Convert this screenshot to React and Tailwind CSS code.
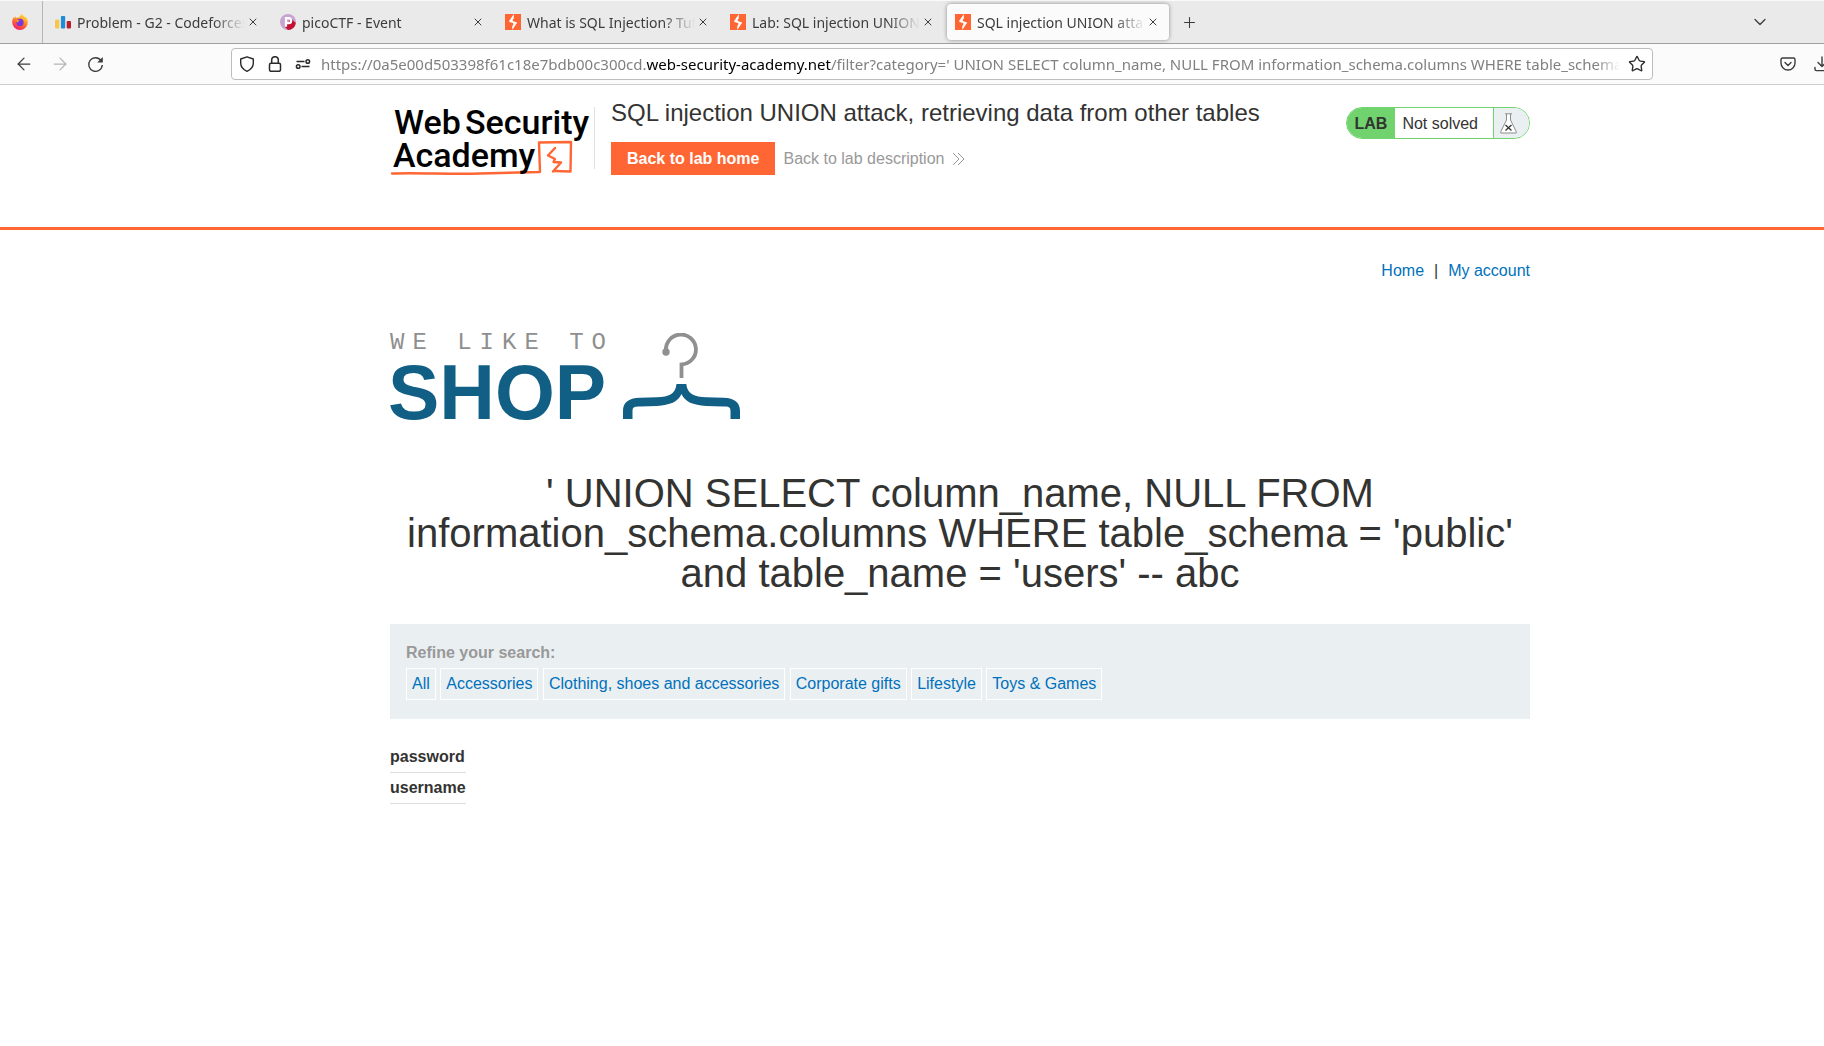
import { ArrowLeft, ArrowRight, X, Plus, ChevronDown, Star } from "lucide-react";

const FirefoxIcon = () => (
  <svg width="16" height="16" viewBox="0 0 16 16" aria-hidden="true">
    <defs>
      <linearGradient id="ff" x1="0.8" y1="0" x2="0.3" y2="1">
        <stop offset="0" stopColor="#fff04a" />
        <stop offset="0.45" stopColor="#ff8a1f" />
        <stop offset="1" stopColor="#f5156c" />
      </linearGradient>
    </defs>
    <path d="M10.5 0c.3 1.600 1.500 2.300 2.300 3.300.3-.1.500-.500.500-.900 1.500 1.400 2.500 3.500 2.500 5.700A7.800 7.800 0 0 1 8 16 7.800 7.800 0 0 1 .2 8.300c0-2 .6-3.800 1.800-5.200l.5 1.400 1.300-2.200.5 1.700c1-.4 2-.5 3-.3C7.600 1.800 9 .7 10.500 0z" fill="url(#ff)" />
    <circle cx="8" cy="8.400" r="3.600" fill="#7a35dd" />
    <path d="M4 6.500c1.500-.9 3-.6 4 .6-1.200 0-1.700.5-1.900 1.300-.8.200-1.600-.4-2.100-1.900z" fill="#ff9a1f" />
  </svg>
);

const CodeforcesIcon = () => (
  <svg width="16" height="16" viewBox="0 0 16 16" aria-hidden="true">
    <rect x="0" y="5.500" width="4.300" height="9" rx="1" fill="#f8c64d" />
    <rect x="5.900" y="2" width="4.300" height="12.500" rx="1" fill="#1f8dd6" />
    <rect x="11.700" y="7" width="4.300" height="7.500" rx="1" fill="#b9202c" />
  </svg>
);

const PicoIcon = () => (
  <svg width="16" height="16" viewBox="0 0 16 16" aria-hidden="true">
    <circle cx="8" cy="8" r="8" fill="#c8a4d3" />
    <path d="M11 4.500l4.800 4.500A8 8 0 0 1 8 16l-3-3z" fill="#c4112f" />
    <path d="M6 12.800V4.200h2.700a2.400 2.400 0 0 1 0 4.900H6" fill="none" stroke="#fff" strokeWidth="2.200" />
  </svg>
);

const BurpIcon = () => (
  <svg width="16" height="16" viewBox="0 0 16 16" aria-hidden="true">
    <rect width="16" height="16" fill="#ff6633" />
    <path d="M8.800 0L4 7.300l3.800 1.200V5.600L8.800 4.500zM7.300 16l4.700-7.300L8.300 7.500v3.200L7.300 12z" fill="#fff" />
    <path d="M4.500 7.200l7 1.800" stroke="#fff" strokeWidth="1.500" />
  </svg>
);

const tabs = [
  { title: "Problem - G2 - Codeforces", icon: CodeforcesIcon },
  { title: "picoCTF - Event", icon: PicoIcon },
  { title: "What is SQL Injection? Tutorial", icon: BurpIcon },
  { title: "Lab: SQL injection UNION attack", icon: BurpIcon },
  { title: "SQL injection UNION attack, retrieving", icon: BurpIcon, active: true },
];

const categories = ["All", "Accessories", "Clothing, shoes and accessories", "Corporate gifts", "Lifestyle", "Toys & Games"];

function Tab({ title, icon: Icon, active }) {
  return (
    <div className={`flex h-9 w-[222px] shrink-0 items-center rounded px-2 ${active ? "bg-[#fbfbfb] shadow-[0_0_4px_rgba(0,0,0,0.4)]" : ""}`}>
      <button className="flex min-w-0 flex-1 items-center gap-[6px] text-left">
        <span className="shrink-0"><Icon /></span>
        <span className="min-w-0 flex-1 overflow-hidden pt-px whitespace-nowrap [mask-image:linear-gradient(to_left,transparent,black_32px)]">{title}</span>
      </button>
      <button aria-label={`Close ${title}`} className="flex w-4 shrink-0 items-center justify-center pr-px">
        <X size={12} strokeWidth={2} className="shrink-0" />
      </button>
    </div>
  );
}

function BrowserChrome() {
  return (
    <div className="font-['Noto_Sans','Open_Sans',sans-serif] text-sm text-[#3c3c3c]">
      <div className="flex h-11 items-center border-t border-b border-t-[#fafafa] border-b-[#a0a0a0] bg-[#eaeaea]">
        <button aria-label="Firefox" className="flex h-[42px] w-[43px] items-center justify-center border-r border-[#b5b5b5] pr-[3px]"><FirefoxIcon /></button>
        <div className="ml-1 flex gap-[3px]">
          {tabs.map((t) => <Tab key={t.title} {...t} />)}
        </div>
        <button aria-label="New tab" className="ml-[10px] flex size-5 items-center justify-center"><Plus size={17} strokeWidth={1.500} /></button>
        <button aria-label="List all tabs" className="mr-[150px] ml-auto"><ChevronDown size={20} strokeWidth={1.500} /></button>
      </div>
      <div className="flex h-[41px] items-center border-b border-[#cccccc] bg-[#fbfbfb]">
        <div className="flex w-[231px] shrink-0 items-center gap-4 pl-[14px]">
          <button aria-label="Back"><ArrowLeft size={20} strokeWidth={1.500} /></button>
          <button aria-label="Forward" disabled className="text-[#b4b4b4]"><ArrowRight size={20} strokeWidth={1.500} /></button>
          <button aria-label="Reload" className="pl-px">
            <svg width="17" height="17" viewBox="0 0 17 17" fill="none" stroke="currentColor" strokeWidth="1.400" aria-hidden="true">
              <path d="M14 4.500A6.800 6.800 0 1 0 15.300 9" />
              <path d="M15.800 1v5.600h-5.600z" fill="currentColor" stroke="none" />
            </svg>
          </button>
        </div>
        <div className="flex h-8 min-w-0 flex-1 items-center rounded border border-[#bdbdbd] bg-white pr-[6px] pl-[7px] text-[15px] text-[#2b2b2b]">
          <svg className="shrink-0" width="16" height="16" viewBox="0 0 16 16" fill="none" stroke="currentColor" strokeWidth="1.400" aria-hidden="true">
            <path d="M8 .8L14.300 3v4c0 3.600-2.600 6.700-6.300 8.300C4.300 13.700 1.700 10.600 1.700 7V3z" strokeLinejoin="round" />
          </svg>
          <svg className="ml-3 shrink-0" width="16" height="16" viewBox="0 0 16 16" fill="none" stroke="currentColor" strokeWidth="1.500" aria-hidden="true">
            <rect x="2.500" y="7.300" width="11" height="8" rx="1.500" />
            <path d="M4.700 7.300V4a3.300 3.300 0 0 1 6.600 0v3.300" />
          </svg>
          <svg className="ml-3 shrink-0" width="16" height="16" viewBox="0 0 16 16" fill="none" stroke="currentColor" strokeWidth="1.500" aria-hidden="true">
            <path d="M1.500 5.500h8M6.500 10.500h8" />
            <circle cx="12.800" cy="5.500" r="1.800" />
            <circle cx="3.200" cy="10.500" r="1.800" />
          </svg>
          <div role="textbox" aria-label="Address" contentEditable suppressContentEditableWarning className="ml-[10px] min-w-0 flex-1 overflow-hidden pt-px whitespace-nowrap text-[#808080] [mask-image:linear-gradient(to_left,transparent,black_24px)]">
            https://0a5e00d503398f61c18e7bdb00c300cd.<span className="text-black">web-security-academy.net</span>/filter?category=' UNION SELECT column_name, NULL FROM information_schema.columns WHERE table_schema = 'public'
          </div>
          <button aria-label="Bookmark this page" className="ml-2"><Star size={18} strokeWidth={1.800} /></button>
        </div>
        <div className="flex w-[267px] shrink-0 items-center gap-[18px] pl-[127px]">
          <button aria-label="Save to Pocket">
            <svg width="16" height="16" viewBox="0 0 16 16" fill="none" stroke="currentColor" strokeWidth="1.400" strokeLinecap="round" strokeLinejoin="round" aria-hidden="true">
              <path d="M2.500 2h11c.8 0 1.500.7 1.500 1.500V7A7 7 0 0 1 1 7V3.500C1 2.700 1.700 2 2.500 2z" />
              <path d="M5 6.500l3 3 3-3" />
            </svg>
          </button>
          <button aria-label="Downloads">
            <svg width="16" height="16" viewBox="0 0 16 16" fill="none" stroke="currentColor" strokeWidth="1.400" strokeLinecap="round" strokeLinejoin="round" aria-hidden="true">
              <path d="M8 1v9M4 6.500l4 4 4-4M1 11.500v1.700c0 .8.600 1.400 1.400 1.400h11.200c.8 0 1.400-.6 1.400-1.400v-1.700" />
            </svg>
          </button>
        </div>
      </div>
    </div>
  );
}

const AcademyLogo = () => (
  <svg className="block shrink-0" width="200" height="74" viewBox="0 0 200 74" role="img" aria-label="Web Security Academy">
    <g fill="none" stroke="#ff6633" strokeLinejoin="round" strokeLinecap="round">
      <path d="M2 71.500C30 70.500 60 72.500 90 71.500L150 70L149 40.500L181 40L180.500 69.500L164 69" strokeWidth="2.400" />
      <path d="M165 46L158 53.500L165 57L163.500 60L171 60.500L163 69.500" strokeWidth="2.400" />
    </g>
    <g fontFamily="Roboto, sans-serif" fontWeight="500" fontSize="34" fill="#000">
      <text x="4" y="32">Web</text>
      <text x="75" y="32">Security</text>
      <text x="3" y="65">Academy</text>
    </g>
  </svg>
);

function LabStatus() {
  return (
    <div className="mt-[22px] flex h-8 shrink-0 items-center overflow-hidden rounded-full border border-[#70d36e] bg-white">
      <span className="flex h-full items-center bg-[#70d36e] px-2 pt-[2px] font-bold">LAB</span>
      <span className="flex h-full items-center border-r border-[#70d36e] px-[15px] pt-px pl-[7px]">Not solved</span>
      <span className="flex h-full w-[35px] items-center bg-[#eaeff2] pl-[6px]">
        <svg width="17" height="21" viewBox="0 0 17 21" fill="#fff" stroke="#8c8c8c" aria-hidden="true">
          <path d="M5 .8h7M6.500 1v6L.8 18.500v1.500h15.400v-1.500L10.500 7V1" />
          <path d="M5.500 12l6 5.500M11.500 12l-6 5.500" stroke="#333" strokeWidth="1.300" />
        </svg>
      </span>
    </div>
  );
}

const ShopLogo = () => (
  <div className="mt-12 flex" role="img" aria-label="We like to shop">
    <div className="w-[217px] shrink-0">
      <div className="font-['Liberation_Mono',monospace] text-2xl leading-6 tracking-[8px] whitespace-nowrap text-[#8f8f8f]">WE LIKE TO</div>
      <div className="-ml-0.5 pt-1 text-[77px] leading-[66px] font-bold text-[#115f85]">SHOP</div>
    </div>
    <svg className="mt-0.5 ml-4 shrink-0" width="118" height="88" viewBox="0 0 118 88" fill="none" aria-hidden="true">
      <path d="M43 18A15 15 0 1 1 58.500 31.500V45" stroke="#8f9090" strokeWidth="3.800" />
      <circle cx="43" cy="19" r="3.700" fill="#8f9090" />
      <path d="M53.500 51h9.800c1 10 8 12.800 20 13.300l17 .5C112 65 117 70 117 78v8h-9.500v-8c0-4-2-4.500-7.500-4.500l-17-.5C70 72 62 69 58.500 61C55 69 47 72 34 73l-17 .5C11.500 73.500 9.500 74 9.500 78v8H0v-8C0 70 5 65 17 64.800l17-.5c12-.5 18.500-3.300 19.500-13.300z" fill="#115f85" />
    </svg>
  </div>
);

export default function App() {
  return (
    <div className="min-h-screen overflow-hidden bg-white">
      {/* The window runs 96px past the right edge of the viewport. */}
      <div className="w-[calc(100%+96px)]">
        <BrowserChrome />
        <div className="font-['Liberation_Sans',Arial,sans-serif] text-base leading-6 text-[#333332]">
          <header className="border-b-[3px] border-[#ff6633]">
            <div className="mx-auto flex h-[142px] max-w-[1140px] items-start">
              <div className="flex pt-[17px]"><AcademyLogo /></div>
              <div className="mt-[22px] ml-1 h-[62px] w-px bg-[#e0e0e0]" />
              <div className="ml-4 flex-1 pt-[13px]">
                <h2 className="text-2xl leading-[30px]">SQL injection UNION attack, retrieving data from other tables</h2>
                <div className="mt-[14px] flex items-center gap-2">
                  <a href="#home" className="bg-[#ff6633] px-4 py-1 leading-[25px] font-bold text-white">Back to lab home</a>
                  <a href="#description" className="flex items-center gap-2 text-[#999999]">
                    Back to lab description
                    <svg width="14" height="14" viewBox="0 0 14 14" fill="none" stroke="#999" aria-hidden="true">
                      <path d="M1 1l6 6-6 6M6 1l6 6-6 6" />
                    </svg>
                  </a>
                </div>
              </div>
              <LabStatus />
            </div>
          </header>
          <main className="mx-auto max-w-[1140px] pt-[29px]">
            <nav className="flex justify-end gap-[10px] whitespace-pre text-[#0071bc]">
              <a href="#home">Home</a>
              <span className="text-[#333332]">|</span>
              <a href="#account">My account</a>
            </nav>
            <ShopLogo />
            <h1 className="mt-12 text-center text-[40px] leading-10">' UNION SELECT column_name, NULL FROM information_schema.columns WHERE table_schema = 'public' and table_name = 'users' -- abc</h1>
            <section className="mt-[31px] bg-[#eaeff2] px-4 pt-[17px] pb-[19px]">
              <div className="font-bold text-[#999999]">Refine your search:</div>
              <div className="mt-[3px]">
                {categories.map((c) => (
                  <span key={c}>
                    <a href="#filter" className="inline-block border border-white px-[5px] py-[3px] align-top text-[#0071bc]">{c}</a>{" "}
                  </span>
                ))}
              </div>
            </section>
            <table className="mt-[23px] text-left">
              <tbody>
                {["password", "username"].map((name) => (
                  <tr key={name} className="border-b border-[#dddddd]">
                    <th className="py-[3px] font-bold">{name}</th>
                  </tr>
                ))}
              </tbody>
            </table>
          </main>
        </div>
      </div>
    </div>
  );
}
